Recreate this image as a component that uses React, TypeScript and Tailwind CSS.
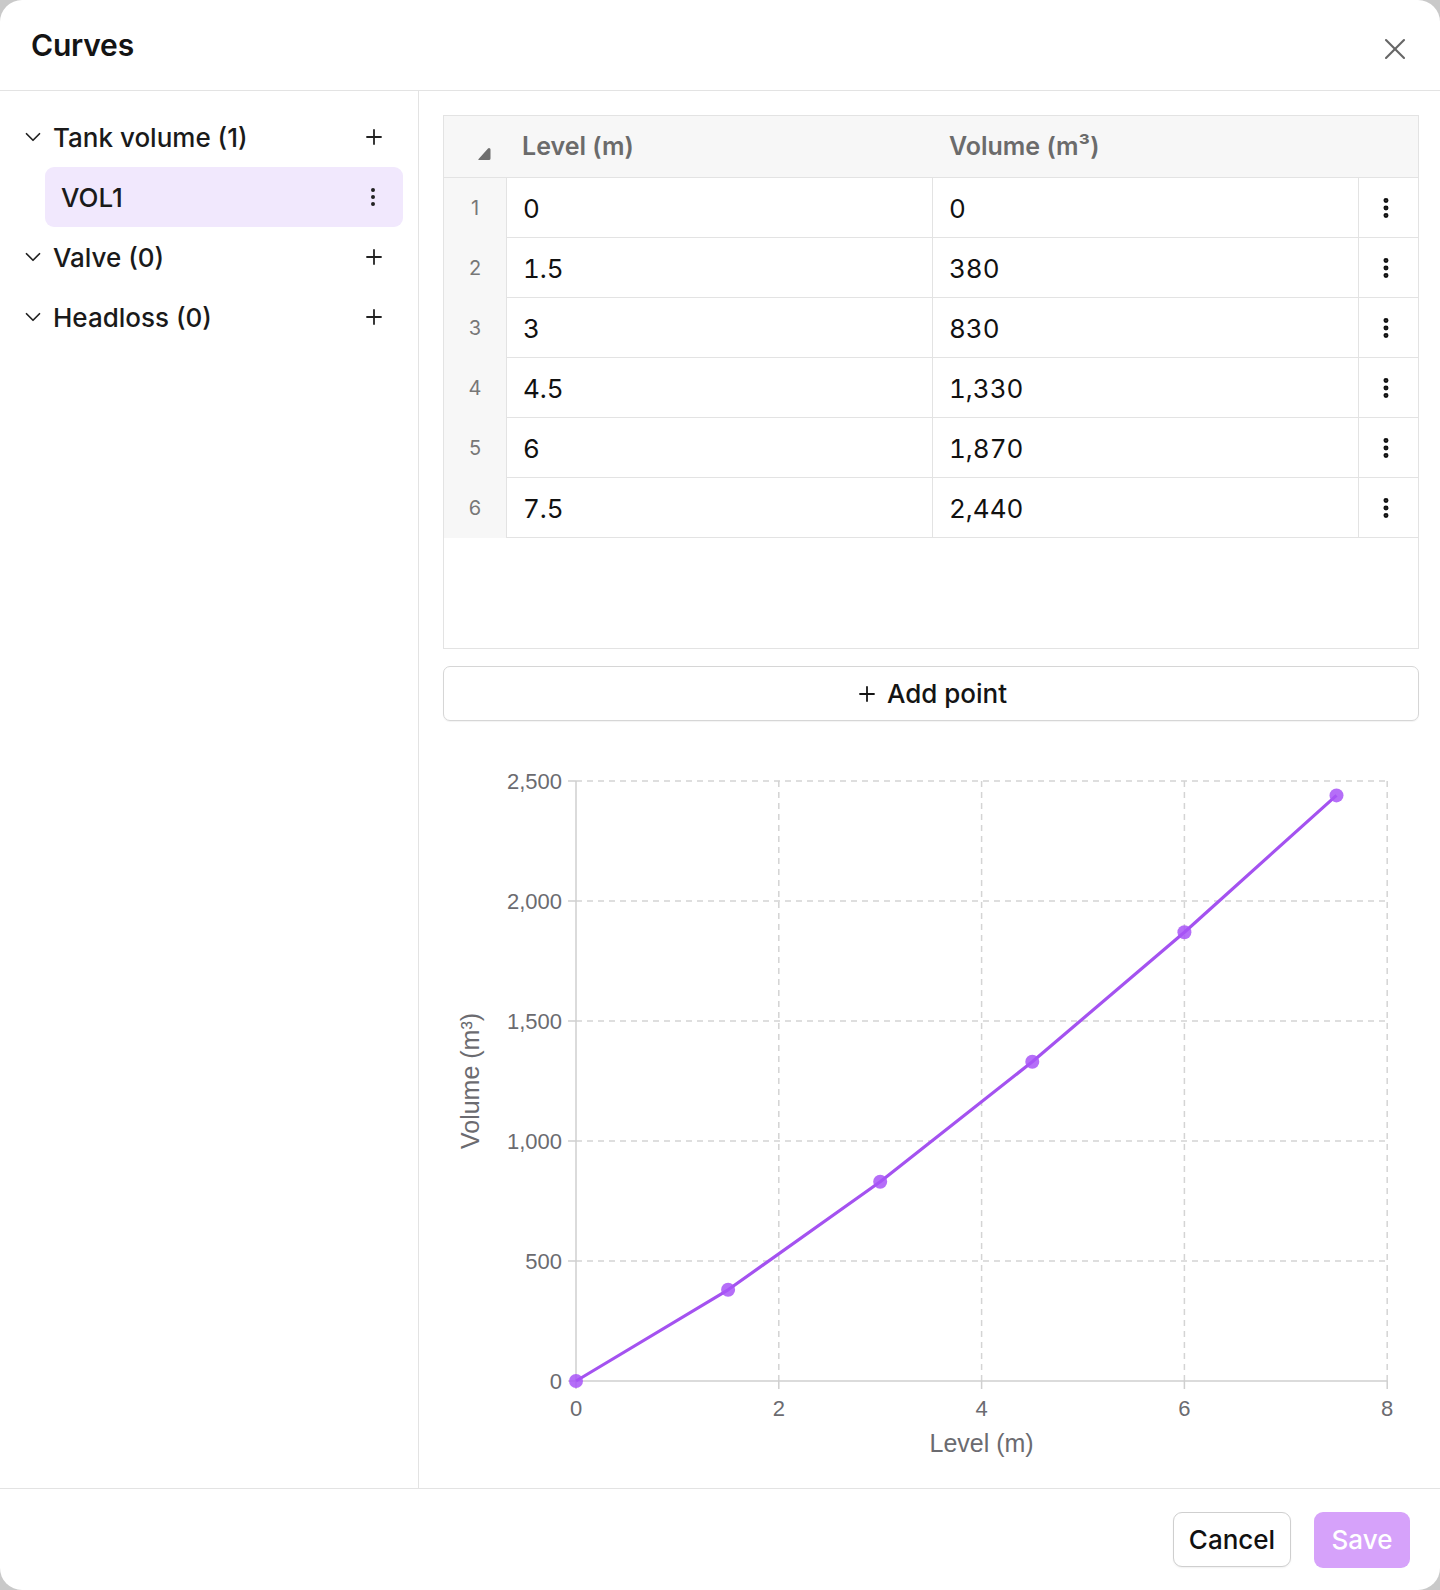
import { ChevronDown, Plus, EllipsisVertical, X } from "lucide-react";

const points: [number, number][] = [
  [0, 0],
  [1.5, 380],
  [3, 830],
  [4.5, 1330],
  [6, 1870],
  [7.5, 2440],
];

const fmt = (n: number) => n.toLocaleString("en-US");

// chart geometry (svg coords)
const X0 = 133;
const XS = 101.4;
const Y0 = 660;
const YS = 0.24;
const px = (x: number) => X0 + x * XS;
const py = (y: number) => Y0 - y * YS;

function TreeGroup({ label }: { label: string }) {
  return (
    <div className="flex items-center h-[60px] pl-[20px] pr-[32px]">
      <ChevronDown size={26} strokeWidth={1.6} className="text-[#222] shrink-0" />
      <span className="ml-[7px] text-[26px] font-medium text-[#1a1a1a] flex-1">{label}</span>
      <Plus size={24} strokeWidth={1.8} className="text-[#222]" />
    </div>
  );
}

function Chart() {
  const ys = [0, 500, 1000, 1500, 2000, 2500];
  const xs = [0, 2, 4, 6, 8];
  const d = points.map(([x, y], i) => `${i ? "L" : "M"}${px(x)},${py(y)}`).join(" ");
  return (
    <svg width="976" height="767" className="block" style={{ fontFamily: '"Liberation Sans", Arial, sans-serif' }}>
      {ys.slice(1).map((y) => (
        <line key={y} x1={X0} x2={px(8)} y1={py(y)} y2={py(y)} stroke="#d4d4d4" strokeWidth="1.5" strokeDasharray="6 5" />
      ))}
      {xs.slice(1).map((x) => (
        <line key={x} x1={px(x)} x2={px(x)} y1={py(2500)} y2={Y0} stroke="#d4d4d4" strokeWidth="1.5" strokeDasharray="6 5" />
      ))}
      <line x1={X0} x2={X0} y1={py(2500)} y2={Y0} stroke="#cfcfcf" strokeWidth="1.5" />
      <line x1={X0} x2={px(8)} y1={Y0} y2={Y0} stroke="#cfcfcf" strokeWidth="1.5" />
      {ys.map((y) => (
        <g key={y}>
          <line x1={X0 - 8} x2={X0} y1={py(y)} y2={py(y)} stroke="#cfcfcf" strokeWidth="1.5" />
          <text x={X0 - 14} y={py(y) + 8} textAnchor="end" fontSize="22" fill="#6b6b70">
            {fmt(y)}
          </text>
        </g>
      ))}
      {xs.map((x) => (
        <g key={x}>
          <line x1={px(x)} x2={px(x)} y1={Y0} y2={Y0 + 8} stroke="#cfcfcf" strokeWidth="1.5" />
          <text x={px(x)} y={Y0 + 35} textAnchor="middle" fontSize="22" fill="#6b6b70">
            {x}
          </text>
        </g>
      ))}
      <text x={(px(0) + px(8)) / 2} y={Y0 + 71} textAnchor="middle" fontSize="25" fill="#6b6b70">
        Level (m)
      </text>
      <text
        x={29}
        y={360}
        textAnchor="middle"
        fontSize="25"
        fill="#6b6b70"
        transform="rotate(-90 29 360)"
        dominantBaseline="middle"
      >
        Volume (m³)
      </text>
      <path d={d} fill="none" stroke="#a452f0" strokeWidth="3.2" strokeLinejoin="round" />
      {points.map(([x, y]) => (
        <circle key={x} cx={px(x)} cy={py(y)} r="7" fill="#a855f7" fillOpacity="0.85" />
      ))}
    </svg>
  );
}

export default function App() {
  return (
    <div className="w-[1440px] h-[1590px] bg-[#c9c9c9]" style={{ fontFamily: 'Inter, "Noto Sans", sans-serif' }}>
      <div className="h-full bg-white rounded-[22px] flex flex-col overflow-hidden">
        {/* header */}
        <header className="h-[91px] shrink-0 border-b border-[#e3e3e3] flex items-center justify-between pl-[31px] pr-[27px]">
          <h1 className="text-[30px] font-semibold text-[#141414] tracking-[-0.2px]">Curves</h1>
          <X size={36} strokeWidth={1.4} className="text-[#666] mt-[7px]" />
        </header>

        <div className="flex-1 flex min-h-0">
          {/* sidebar */}
          <aside className="w-[419px] shrink-0 border-r border-[#e3e3e3] pt-[16px]">
            <TreeGroup label="Tank volume (1)" />
            <div className="ml-[45px] w-[358px] h-[60px] rounded-[9px] bg-[#f1e8fd] flex items-center pl-[16px] pr-[18px]">
              <span className="flex-1 text-[26px] font-medium text-[#1a1a1a]">VOL1</span>
              <EllipsisVertical size={24} strokeWidth={2} className="text-[#222]" />
            </div>
            <TreeGroup label="Valve (0)" />
            <TreeGroup label="Headloss (0)" />
          </aside>

          {/* main */}
          <main className="flex-1 pl-[24px] pr-[21px] pt-[24px] flex flex-col">
            <div className="h-[534px] border border-[#e3e3e3] bg-white">
              <div className="grid grid-cols-[62px_1fr_1fr_60px] h-[62px] bg-[#f7f7f7] border-b border-[#e3e3e3] items-center">
                <div className="flex pl-[33px] pt-[14px]">
                  <svg width="14" height="14" viewBox="0 0 14 14">
                    <path d="M12 1 Q13.5 1 13.5 2.5 L13.5 11.5 Q13.5 13 12 13 L2 13 Q0.5 13 1.6 11.9 L11 1.6 Q11.5 1 12 1 Z" fill="#6f6f6f" />
                  </svg>
                </div>
                <div className="pl-[16px] text-[25px] font-semibold text-[#6b6b6b]">Level (m)</div>
                <div className="pl-[17px] text-[25px] font-semibold text-[#6b6b6b]">Volume (m³)</div>
                <div />
              </div>
              {points.map(([lvl, vol], i) => (
                <div key={i} className="grid grid-cols-[62px_1fr_1fr_60px] h-[60px]">
                  <div className="bg-[#f7f7f7] flex items-center justify-center text-[20px] text-[#777]">{i + 1}</div>
                  <div className="border-l border-b border-[#e3e3e3] flex items-center pl-[16px] pt-[1px] text-[26px] tabular-nums text-[#111]">{lvl}</div>
                  <div className="border-l border-b border-[#e3e3e3] flex items-center pl-[16px] pt-[1px] text-[26px] tabular-nums text-[#111]">{fmt(vol)}</div>
                  <div className="border-l border-b border-[#e3e3e3] flex items-center justify-center pr-[6px]">
                    <EllipsisVertical size={26} strokeWidth={2.6} className="text-[#111]" />
                  </div>
                </div>
              ))}
            </div>

            <button className="mt-[17px] h-[55px] rounded-[7px] border border-[#d6d6d6] shadow-[0_1px_1px_rgba(0,0,0,0.05)] flex items-center justify-center gap-[8px] text-[26px] font-medium text-[#141414]">
              <Plus size={24} strokeWidth={1.8} />
              Add point
            </button>

            <div className="flex-1">
              <Chart />
            </div>
          </main>
        </div>

        {/* footer */}
        <footer className="h-[102px] shrink-0 border-t border-[#e3e3e3] flex items-center justify-end gap-[23px] pr-[30px]">
          <button className="w-[118px] h-[55px] rounded-[9px] border border-[#cfcfcf] bg-white text-[26px] font-medium text-[#111] shadow-[0_1px_2px_rgba(0,0,0,0.06)]">
            Cancel
          </button>
          <button className="w-[96px] h-[56px] rounded-[9px] bg-[#d6a2fa] text-[26px] font-medium text-white">
            Save
          </button>
        </footer>
      </div>
    </div>
  );
}
